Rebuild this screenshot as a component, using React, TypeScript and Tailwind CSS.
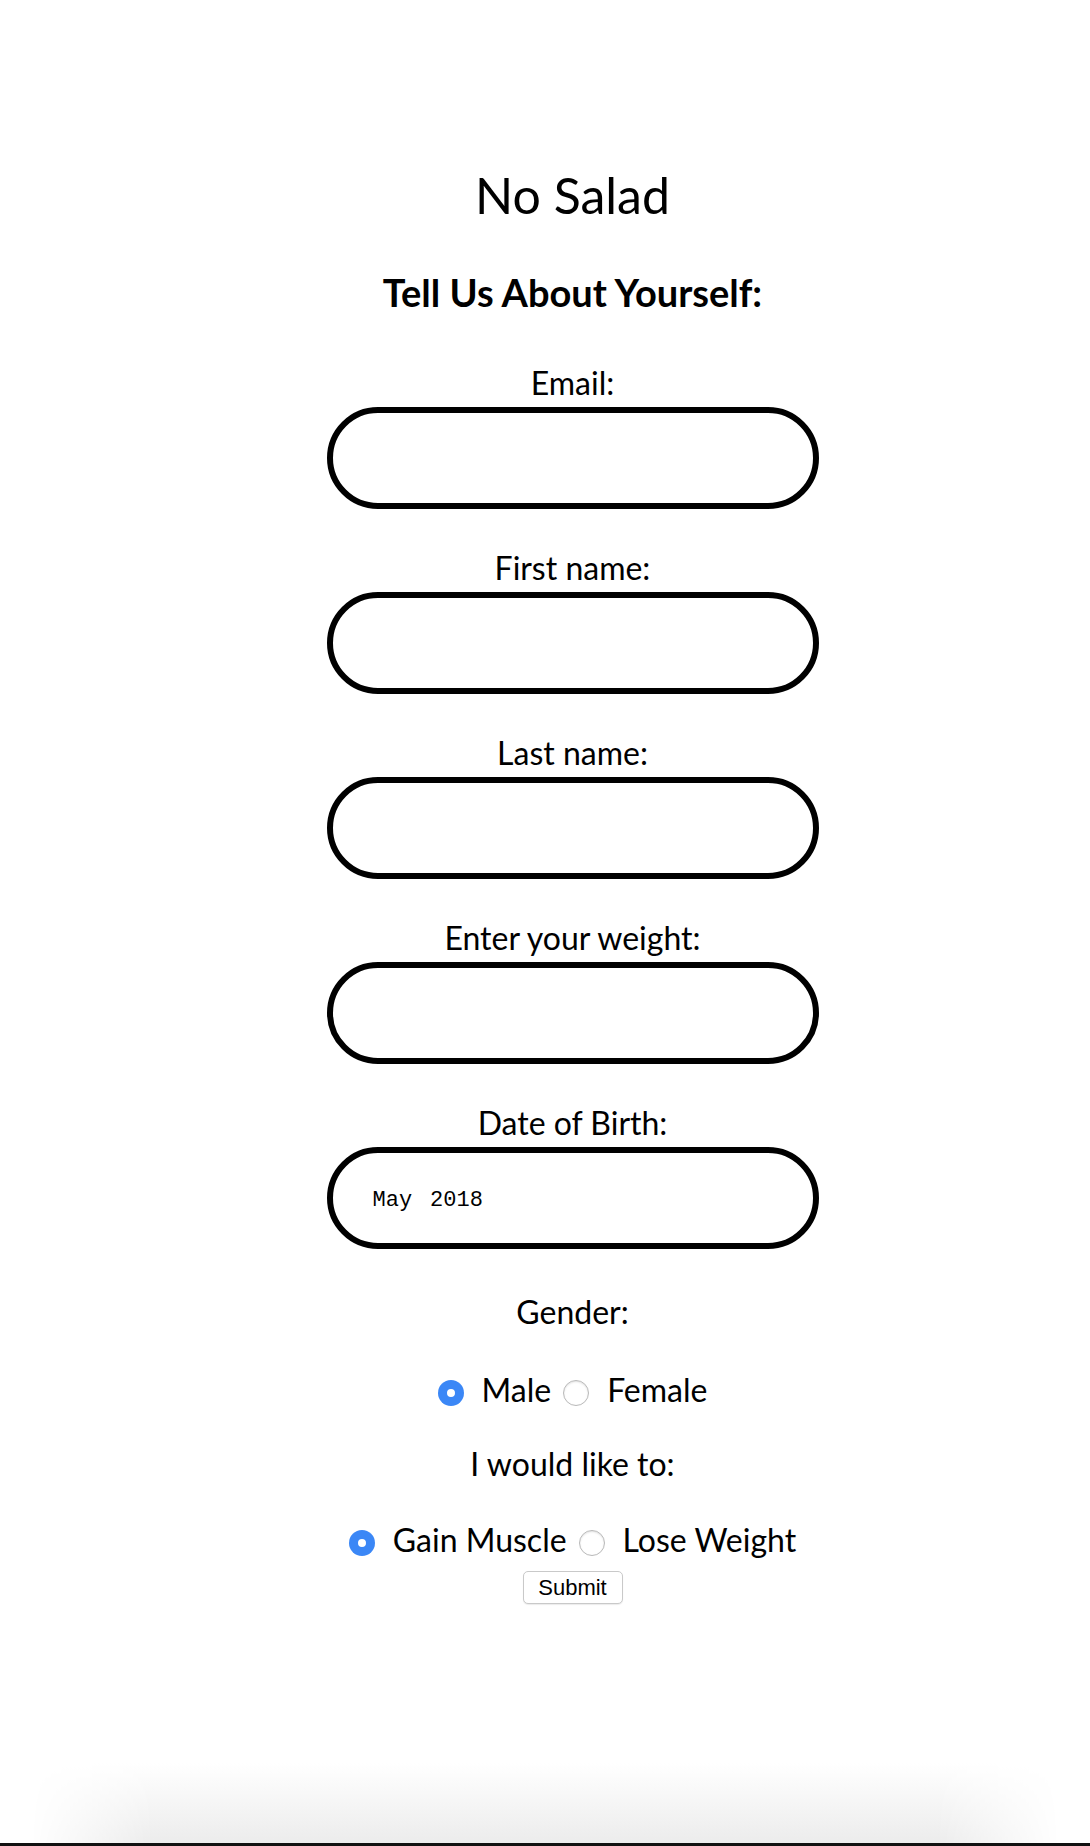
import React from 'react';

const font = { fontFamily: 'Lato, "Noto Sans", sans-serif' };

function Field({ label, type = 'text', value }: { label: string; type?: string; value?: React.ReactNode }) {
  return (
    <div className="flex flex-col items-center mt-[43px] first:mt-0">
      <label className="text-[32px] leading-none text-black mb-[8px]">{label}</label>
      <div className="w-[492px] h-[102px] rounded-full border-[6px] border-black bg-white flex items-center px-[40px]">
        {value ? (
          value
        ) : (
          <input type={type} className="w-full h-full outline-none bg-transparent text-[22px]" />
        )}
      </div>
    </div>
  );
}

function Radio({ label, checked, name }: { label: string; checked?: boolean; name: string }) {
  return (
    <label className="flex items-center gap-[18px]">
      <input
        type="radio"
        name={name}
        defaultChecked={checked}
        className="appearance-none w-[26px] h-[26px] mt-[6px] rounded-full bg-white border border-[#b9b9b9] shadow-[inset_0_1px_2px_rgba(0,0,0,0.12)] checked:border-0 checked:shadow-[inset_0_0_0_9px_#3b87f6]"
      />
      <span className="text-[32px] leading-none">{label}</span>
    </label>
  );
}

export default function App() {
  const mono = { fontFamily: '"Liberation Mono", "Courier New", monospace' };
  return (
    <div className="h-[1846px] flex flex-col bg-white text-black" style={font}>
      <div className="pl-[55px] pt-[170px] flex flex-col items-center">
        <h1 className="text-[50px] leading-none">No Salad</h1>
        <h2 className="text-[38px] leading-none font-bold mt-[53px]">Tell Us About Yourself:</h2>
        <form className="flex flex-col items-center mt-[56px]">
          <div className="flex flex-col">
            <Field label="Email:" type="email" />
            <Field label="First name:" />
            <Field label="Last name:" />
            <Field label="Enter your weight:" />
            <Field
              label="Date of Birth:"
              value={
                <span className="flex gap-[18px] text-[22px] text-black mt-[4px]" style={mono}>
                  <span>May</span>
                  <span>2018</span>
                </span>
              }
            />
          </div>
          <div className="text-[32px] leading-none mt-[47px]">Gender:</div>
          <div className="flex items-center gap-[12px] mt-[46px]">
            <Radio name="gender" label="Male" checked />
            <Radio name="gender" label="Female" />
          </div>
          <div className="text-[32px] leading-none mt-[42px]">I would like to:</div>
          <div className="flex items-center gap-[12px] mt-[44px]">
            <Radio name="goal" label="Gain Muscle" checked />
            <Radio name="goal" label="Lose Weight" />
          </div>
          <button
            type="button"
            className="mt-[15px] w-[100px] h-[33px] rounded-[5px] border border-[#c9c9c9] bg-white shadow-[0_1px_1px_rgba(0,0,0,0.08)] text-[22px] leading-none"
            style={{ fontFamily: '"Liberation Sans", Arial, sans-serif' }}
          >
            Submit
          </button>
        </form>
      </div>
      <div className="mt-auto flex flex-col">
        <div className="h-[80px] mx-[30px] bg-gradient-to-b from-white to-[#ececec] [mask-image:linear-gradient(to_right,transparent,black_12%,black_88%,transparent)]" />
        <div className="h-[3px] bg-[#111]" />
      </div>
    </div>
  );
}
